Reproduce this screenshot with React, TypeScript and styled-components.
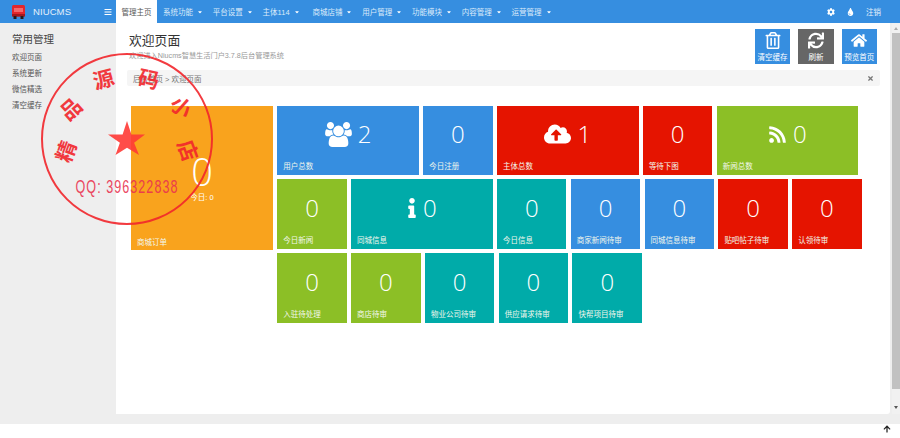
import React from "react";
import styled, { createGlobalStyle } from "styled-components";
import { FaCog, FaTint, FaRegTrashAlt, FaSync, FaHome, FaCloudUploadAlt, FaRss, FaInfo, FaArrowUp, FaTimes, FaBars, FaCaretDown } from "react-icons/fa";

const CJK = `"Liberation Sans", "Noto Sans CJK SC", sans-serif`;
const BLUE = "#368ee0";
const RED = "#e51400";
const LIME = "#8cbf26";
const TEAL = "#00aba9";
const ORANGE = "#f9a31d";

const Global = createGlobalStyle`
  html, body { margin: 0; padding: 0; background: #fff; overflow: hidden; }
  body { font-family: ${CJK}; }
  * { box-sizing: border-box; }
`;

const Page = styled.div`
  position: relative;
  width: 900px;
  height: 438px;
  display: flex;
  flex-direction: column;
  overflow: hidden;
  background: #fff;
`;

const Header = styled.header`
  height: 23px;
  flex: none;
  background: ${BLUE};
  display: flex;
  align-items: center;
  color: #fff;
`;

const Brand = styled.div`
  width: 116px;
  height: 23px;
  padding-left: 12px;
  display: flex;
  align-items: center;
  flex: none;
`;

const BrandName = styled.span`
  margin-left: 8px;
  font-size: 9.5px;
  letter-spacing: 0.1px;
  color: #e4f0fb;
`;

const BurgerIcon = styled(FaBars)`
  margin-left: 33px;
  width: 8px;
  height: 8px;
  color: #fff;
`;

const Nav = styled.nav`
  display: flex;
  align-items: center;
  height: 23px;
  flex: 1;
`;

const ActiveTab = styled.div`
  width: 41px;
  height: 23px;
  background: #fff;
  color: #555;
  font-size: 7.5px;
  display: flex;
  align-items: center;
  justify-content: center;
  margin-right: 6px;
`;

const NavItem = styled.div`
  width: 49.8px;
  height: 23px;
  font-size: 7.5px;
  color: #dcebfa;
  display: flex;
  align-items: center;
  flex: none;
`;

const Caret = styled(FaCaretDown)`
  width: 6px;
  height: 6px;
  margin-left: 4px;
  color: #fff;
`;

const HeaderTools = styled.div`
  display: flex;
  align-items: center;
  padding-right: 19px;
  font-size: 7.5px;
  color: #e4f0fb;
`;

const ToolCog = styled(FaCog)`
  width: 8px;
  height: 8px;
  margin-right: 12px;
  color: #fff;
`;

const ToolTint = styled(FaTint)`
  width: 7px;
  height: 8px;
  margin-right: 12px;
  color: #fff;
`;

const Body = styled.div`
  flex: none;
  height: 391px;
  display: flex;
  background: #eee;
`;

const Sidebar = styled.aside`
  width: 116px;
  flex: none;
  padding: 9px 0 0 12px;
  background: #eee;
`;

const SideTitle = styled.div`
  font-size: 10.5px;
  line-height: 15px;
  color: #444;
  margin-bottom: 3px;
`;

const SideLink = styled.div`
  font-size: 7.5px;
  line-height: 16px;
  color: #555;
`;

const Main = styled.main`
  width: 774px;
  flex: none;
  background: #fff;
  border-bottom-right-radius: 3px;
  padding: 6px 0 0 11px;
`;

const TopRow = styled.div`
  display: flex;
  justify-content: space-between;
  height: 41px;
  padding-right: 13px;
`;

const TitleBlock = styled.div`
  padding: 4px 0 0 2px;
`;

const PageTitle = styled.h1`
  margin: 0;
  font-size: 12.8px;
  font-weight: 400;
  line-height: 16px;
  color: #333;
`;

const Subtitle = styled.p`
  margin: 2px 0 0;
  font-size: 7.2px;
  line-height: 10px;
  color: #999;
`;

const ActionGroup = styled.div`
  display: flex;
  gap: 8px;
`;

const ActionButton = styled.div<{ $bg: string }>`
  width: 35.4px;
  height: 35px;
  background: ${(p) => p.$bg};
  color: #fff;
  display: flex;
  flex-direction: column;
  align-items: center;
  padding-top: 3px;
  font-size: 7.5px;
  line-height: 10px;
  white-space: nowrap;
  svg {
    width: 16px;
    height: 17px;
    margin-bottom: 4px;
  }
`;

const Crumbs = styled.div`
  width: 753px;
  height: 16px;
  background: #f5f5f5;
  border-radius: 2px;
  padding: 0 6px;
  font-size: 7.5px;
  color: #777;
  display: flex;
  align-items: center;
  justify-content: space-between;
`;

const CrumbClose = styled(FaTimes)`
  width: 7px;
  height: 7px;
  color: #777;
`;

const Board = styled.section`
  display: flex;
  gap: 4.3px;
  margin: 19.5px 0 0 4px;
  align-items: flex-start;
`;

const BigTile = styled.div`
  position: relative;
  width: 142px;
  height: 144px;
  background: ${ORANGE};
  color: #fff;
  display: flex;
  flex-direction: column;
  align-items: center;
  padding-top: 43px;
`;

const BigNumber = styled.div`
  font-family: "Open Sans", sans-serif;
  font-weight: 300;
  font-size: 38px;
  line-height: 44px;
`;

const TodayNote = styled.div`
  font-size: 7.5px;
  line-height: 10px;
`;

const Grid = styled.div`
  width: 590px;
  display: flex;
  flex-wrap: wrap;
  gap: 4.3px;
`;

const Tile = styled.div<{ $bg: string; $wide?: boolean }>`
  width: ${(p) => (p.$wide ? 141.6 : 69.5)}px;
  height: 69.5px;
  background: ${(p) => p.$bg};
  color: #fff;
  display: flex;
  flex-direction: column;
`;

const TileValue = styled.div`
  flex: 1;
  display: flex;
  align-items: center;
  justify-content: center;
  gap: 6px;
  padding-top: 1px;
  font-family: "Open Sans", sans-serif;
  font-weight: 300;
  font-size: 24px;
  line-height: 30px;
`;

const TileLabel = styled.div`
  font-size: 7.5px;
  line-height: 10px;
  padding: 0 0 3px 6px;
  color: #f2f7ec;
`;

const BigLabel = styled(TileLabel)`
  position: absolute;
  left: 0;
  bottom: 0;
  padding-bottom: 2px;
`;

const UsersSvg = styled.svg`
  width: 27px;
  height: 25px;
  fill: #fff;
`;

const CloudIcon = styled(FaCloudUploadAlt)`
  width: 27px;
  height: 22px;
`;

const RssIcon = styled(FaRss)`
  width: 19px;
  height: 19px;
`;

const InfoIcon = styled(FaInfo)`
  width: 10px;
  height: 20px;
`;

const Scrollbar = styled.div`
  width: 8px;
  flex: none;
  margin-left: 2px;
  background: #f1f1f1;
  display: flex;
  flex-direction: column;
  align-items: center;
  height: 391px;
`;

const ScrollArrow = styled.div<{ $down?: boolean }>`
  flex: none;
  width: 0;
  height: 3px;
  border-left: 2.5px solid transparent;
  border-right: 2.5px solid transparent;
  ${(p) => (p.$down ? "border-top: 3px solid #555; margin-top: 17px;" : "border-bottom: 3px solid #aaa; margin-top: 4px;")}
`;

const ScrollThumb = styled.div`
  width: 8px;
  height: 356px;
  margin-top: 3px;
  background: #c1c1c1;
  flex: none;
`;

const FootStrip = styled.div`
  height: 10px;
  flex: none;
  background: #eee;
`;

const FootRow = styled.div`
  height: 14px;
  flex: none;
  background: #fff;
  display: flex;
  justify-content: flex-end;
  padding: 1px 9px 0 0;
`;

const UpIcon = styled(FaArrowUp)`
  width: 8px;
  height: 8px;
  color: #222;
`;

const StampSvg = styled.svg`
  position: absolute;
  left: 36px;
  top: 48px;
  width: 184px;
  height: 184px;
  opacity: 0.9;
  pointer-events: none;
`;

const UsersIcon = () => (
  <UsersSvg viewBox="0 0 1920 1792">
    <path d="M593 896q-162 5-265 128h-134q-82 0-138-40.500t-56-118.500q0-353 124-353 6 0 43.500 21t97.500 42.500 119 21.500q67 0 133-23-5 37-5 66 0 139 81 256zm1071 637q0 120-73 189.500t-194 69.500h-874q-121 0-194-69.500t-73-189.500q0-53 3.500-103.500t14-109 26.500-108.500 43-97.500 62-81 85.500-53.500 111.500-20q10 0 43 21.500t73 48 107 48 135 21.500 135-21.500 107-48 73-48 43-21.500q61 0 111.500 20t85.500 53.500 62 81 43 97.500 26.500 108.500 14 109 3.500 103.500zm-1024-1277q0 106-75 181t-181 75-181-75-75-181 75-181 181-75 181 75 75 181zm704 384q0 159-112.500 271.500t-271.500 112.500-271.500-112.500-112.500-271.500 112.500-271.500 271.500-112.500 271.500 112.500 112.500 271.500zm576 225q0 78-56 118.500t-138 40.500h-134q-103-123-265-128 81-117 81-256 0-29-5-66 66 23 133 23 59 0 119-21.500t97.500-42.500 43.500-21q124 0 124 353zm-128-609q0 106-75 181t-181 75-181-75-75-181 75-181 181-75 181 75 75 181z" />
  </UsersSvg>
);

const Logo = () => (
  <svg width="13" height="14" viewBox="0 0 13 14">
    <rect x="0" y="0" width="13" height="11.500" rx="1.500" fill="#e2262c" />
    <rect x="2" y="3" width="9" height="4" fill="#f4686b" />
    <rect x="0" y="9" width="13" height="2.500" fill="#a3181c" />
    <rect x="1.500" y="11" width="3" height="3" fill="#2a1a1a" />
    <rect x="8.500" y="11" width="3" height="3" fill="#2a1a1a" />
  </svg>
);

const stampChars: { c: string; x: number; y: number; r: number }[] = [
  { c: "精", x: 29, y: 103, r: -70 },
  { c: "品", x: 34, y: 60, r: -42 },
  { c: "源", x: 67, y: 30, r: -15 },
  { c: "码", x: 113, y: 30, r: 12 },
  { c: "小", x: 146, y: 58, r: 42 },
  { c: "店", x: 153, y: 102, r: 70 },
];

const Stamp = () => (
  <StampSvg viewBox="0 0 184 184">
    <circle cx="91" cy="91" r="85" fill="none" stroke="#f2262c" strokeWidth="2" />
    <polygon
      points="91,73 95.400,86.500 109,86.500 98.100,94.700 103,107 91,99.700 79.500,107 83.900,94.700 72,86.500 86.600,86.500"
      fill="#ff3a36"
    />
    {stampChars.map((s) => (
      <text
        key={s.c}
        x={s.x}
        y={s.y}
        textAnchor="middle"
        dominantBaseline="central"
        fontFamily='"Noto Sans CJK SC", sans-serif'
        fontWeight="700"
        fontSize="21"
        fill="#f2262c"
        transform={`rotate(${s.r} ${s.x} ${s.y})`}
      >
        {s.c}
      </text>
    ))}
    <text
      x="91"
      y="145"
      textAnchor="middle"
      fontFamily='"Liberation Sans", sans-serif'
      fontSize="18"
      letterSpacing="1.5"
      textLength="103"
      lengthAdjust="spacingAndGlyphs"
      fill="#ea3350"
    >
      QQ: 396322838
    </text>
  </StampSvg>
);

const navItems = ["系统功能", "平台设置", "主体114", "商城店铺", "用户管理", "功能模块", "内容管理", "运营管理"];

const sideLinks = ["欢迎页面", "系统更新", "微信精选", "清空缓存"];

const tiles: { label: string; value: string; bg: string; wide?: boolean; icon?: React.ReactNode }[] = [
  { label: "用户总数", value: "2", bg: BLUE, wide: true, icon: <UsersIcon /> },
  { label: "今日注册", value: "0", bg: BLUE },
  { label: "主体总数", value: "1", bg: RED, wide: true, icon: <CloudIcon /> },
  { label: "等待下图", value: "0", bg: RED },
  { label: "新闻总数", value: "0", bg: LIME, wide: true, icon: <RssIcon /> },
  { label: "今日新闻", value: "0", bg: LIME },
  { label: "同城信息", value: "0", bg: TEAL, wide: true, icon: <InfoIcon /> },
  { label: "今日信息", value: "0", bg: TEAL },
  { label: "商家新闻待审", value: "0", bg: BLUE },
  { label: "同城信息待审", value: "0", bg: BLUE },
  { label: "贴吧帖子待审", value: "0", bg: RED },
  { label: "认领待审", value: "0", bg: RED },
  { label: "入驻待处理", value: "0", bg: LIME },
  { label: "商店待审", value: "0", bg: LIME },
  { label: "物业公司待审", value: "0", bg: TEAL },
  { label: "供应请求待审", value: "0", bg: TEAL },
  { label: "快帮项目待审", value: "0", bg: TEAL },
];

export default function App() {
  return (
    <Page>
      <Global />
      <Header>
        <Brand>
          <Logo />
          <BrandName>NIUCMS</BrandName>
          <BurgerIcon />
        </Brand>
        <Nav>
          <ActiveTab>管理主页</ActiveTab>
          {navItems.map((n) => (
            <NavItem key={n}>
              {n}
              <Caret />
            </NavItem>
          ))}
        </Nav>
        <HeaderTools>
          <ToolCog />
          <ToolTint />
          注销
        </HeaderTools>
      </Header>
      <Body>
        <Sidebar>
          <SideTitle>常用管理</SideTitle>
          {sideLinks.map((s) => (
            <SideLink key={s}>{s}</SideLink>
          ))}
        </Sidebar>
        <Main>
          <TopRow>
            <TitleBlock>
              <PageTitle>欢迎页面</PageTitle>
              <Subtitle>欢迎进入Niucms智慧生活门户3.7.8后台管理系统</Subtitle>
            </TitleBlock>
            <ActionGroup>
              <ActionButton $bg={BLUE}>
                <FaRegTrashAlt />
                清空缓存
              </ActionButton>
              <ActionButton $bg="#666">
                <FaSync />
                刷新
              </ActionButton>
              <ActionButton $bg={BLUE}>
                <FaHome />
                预览首页
              </ActionButton>
            </ActionGroup>
          </TopRow>
          <Crumbs>
            <span>后台首页 &gt; 欢迎页面</span>
            <CrumbClose />
          </Crumbs>
          <Board>
            <BigTile>
              <BigNumber>0</BigNumber>
              <TodayNote>今日: 0</TodayNote>
              <BigLabel>商城订单</BigLabel>
            </BigTile>
            <Grid>
              {tiles.map((t) => (
                <Tile key={t.label} $bg={t.bg} $wide={t.wide}>
                  <TileValue>
                    {t.icon}
                    {t.value}
                  </TileValue>
                  <TileLabel>{t.label}</TileLabel>
                </Tile>
              ))}
            </Grid>
          </Board>
        </Main>
        <Scrollbar>
          <ScrollArrow />
          <ScrollThumb />
          <ScrollArrow $down />
        </Scrollbar>
      </Body>
      <FootStrip />
      <FootRow>
        <UpIcon />
      </FootRow>
      <Stamp />
    </Page>
  );
}
